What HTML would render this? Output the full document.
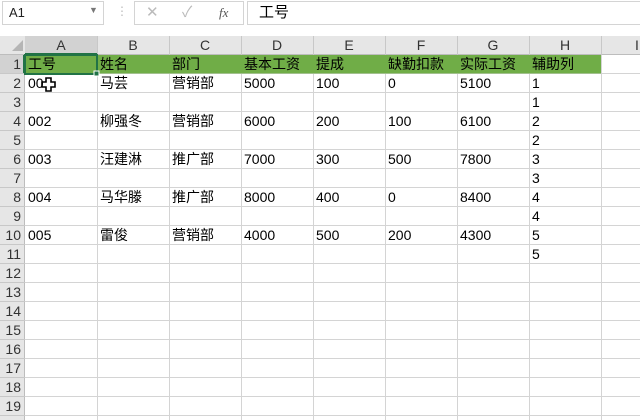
<!DOCTYPE html>
<html><head><meta charset="utf-8"><style>
*{margin:0;padding:0;box-sizing:border-box}
html,body{width:640px;height:420px;overflow:hidden}
body{background:#fff;font-family:"Liberation Sans","Noto Sans CJK SC",sans-serif;position:relative}
.a{position:absolute}
.t{position:absolute;font-size:14px;color:#000;white-space:nowrap;line-height:19px}
.rh{position:absolute;left:0;width:25px;text-align:right;padding-right:4px;font-size:14px;color:#333;line-height:19px}
.ch{position:absolute;top:36px;height:19px;width:72px;text-align:center;font-size:14px;color:#333;line-height:19px}
</style></head><body>
<div class="a" style="left:2px;top:1px;width:102px;height:24px;border:1px solid #d4d4d4;background:#fff"></div>
<div class="t" style="left:9px;top:3px;font-size:13px;color:#222">A1</div>
<div class="t" style="left:89px;top:1px;font-size:9px;color:#777">▼</div>
<div class="t" style="left:116px;top:2px;font-size:12px;color:#bbb">⋮</div>
<div class="a" style="left:134px;top:1px;width:110px;height:24px;border:1px solid #d4d4d4;background:#fff"></div>
<div class="t" style="left:146px;top:3px;font-size:15px;color:#bbb">✕</div>
<div class="t" style="left:182px;top:3px;font-size:15px;color:#bbb">✓</div>
<div class="t" style="left:219px;top:3px;font-size:13px;color:#555;font-style:italic;font-family:'Liberation Serif',serif">fx</div>
<div class="a" style="left:247px;top:1px;width:400px;height:24px;border:1px solid #d4d4d4;background:#fff"></div>
<div class="t" style="left:259px;top:3px;font-size:15px">工号</div>
<div class="a" style="left:0;top:36px;width:640px;height:19px;background:#e6e6e6;border-bottom:1px solid #bdbdbd"></div>
<div class="a" style="left:0;top:55px;width:25px;height:365px;background:#e6e6e6;border-right:1px solid #bdbdbd"></div>
<div class="a" style="left:25px;top:36px;width:72px;height:19px;background:#d2d2d2;border-bottom:2px solid #217346"></div>
<div class="a" style="left:0;top:55px;width:25px;height:19px;background:#d2d2d2;border-right:2px solid #217346"></div>
<div class="a" style="left:12px;top:40px;width:0;height:0;border-left:11px solid transparent;border-bottom:11px solid #b5b5b5"></div>
<div class="ch" style="left:25px">A</div><div class="ch" style="left:97px">B</div><div class="ch" style="left:169px">C</div><div class="ch" style="left:241px">D</div><div class="ch" style="left:313px">E</div><div class="ch" style="left:385px">F</div><div class="ch" style="left:457px">G</div><div class="ch" style="left:529px">H</div><div class="ch" style="left:601px">I</div>
<svg class="a" style="left:0;top:0" width="640" height="420">
<g stroke="#d4d4d4" stroke-width="1">
<line x1="97.5" y1="55" x2="97.5" y2="420"/><line x1="169.5" y1="55" x2="169.5" y2="420"/><line x1="241.5" y1="55" x2="241.5" y2="420"/><line x1="313.5" y1="55" x2="313.5" y2="420"/><line x1="385.5" y1="55" x2="385.5" y2="420"/><line x1="457.5" y1="55" x2="457.5" y2="420"/><line x1="529.5" y1="55" x2="529.5" y2="420"/><line x1="601.5" y1="55" x2="601.5" y2="420"/>
<line x1="25" y1="73.5" x2="640" y2="73.5"/><line x1="25" y1="92.5" x2="640" y2="92.5"/><line x1="25" y1="111.5" x2="640" y2="111.5"/><line x1="25" y1="130.5" x2="640" y2="130.5"/><line x1="25" y1="149.5" x2="640" y2="149.5"/><line x1="25" y1="168.5" x2="640" y2="168.5"/><line x1="25" y1="187.5" x2="640" y2="187.5"/><line x1="25" y1="206.5" x2="640" y2="206.5"/><line x1="25" y1="225.5" x2="640" y2="225.5"/><line x1="25" y1="244.5" x2="640" y2="244.5"/><line x1="25" y1="263.5" x2="640" y2="263.5"/><line x1="25" y1="282.5" x2="640" y2="282.5"/><line x1="25" y1="301.5" x2="640" y2="301.5"/><line x1="25" y1="320.5" x2="640" y2="320.5"/><line x1="25" y1="339.5" x2="640" y2="339.5"/><line x1="25" y1="358.5" x2="640" y2="358.5"/><line x1="25" y1="377.5" x2="640" y2="377.5"/><line x1="25" y1="396.5" x2="640" y2="396.5"/><line x1="25" y1="415.5" x2="640" y2="415.5"/>
</g>
<g stroke="#c8c8c8"><line x1="97.5" y1="36" x2="97.5" y2="55"/><line x1="169.5" y1="36" x2="169.5" y2="55"/><line x1="241.5" y1="36" x2="241.5" y2="55"/><line x1="313.5" y1="36" x2="313.5" y2="55"/><line x1="385.5" y1="36" x2="385.5" y2="55"/><line x1="457.5" y1="36" x2="457.5" y2="55"/><line x1="529.5" y1="36" x2="529.5" y2="55"/><line x1="601.5" y1="36" x2="601.5" y2="55"/>
<line x1="0" y1="73.5" x2="25" y2="73.5"/><line x1="0" y1="92.5" x2="25" y2="92.5"/><line x1="0" y1="111.5" x2="25" y2="111.5"/><line x1="0" y1="130.5" x2="25" y2="130.5"/><line x1="0" y1="149.5" x2="25" y2="149.5"/><line x1="0" y1="168.5" x2="25" y2="168.5"/><line x1="0" y1="187.5" x2="25" y2="187.5"/><line x1="0" y1="206.5" x2="25" y2="206.5"/><line x1="0" y1="225.5" x2="25" y2="225.5"/><line x1="0" y1="244.5" x2="25" y2="244.5"/><line x1="0" y1="263.5" x2="25" y2="263.5"/><line x1="0" y1="282.5" x2="25" y2="282.5"/><line x1="0" y1="301.5" x2="25" y2="301.5"/><line x1="0" y1="320.5" x2="25" y2="320.5"/><line x1="0" y1="339.5" x2="25" y2="339.5"/><line x1="0" y1="358.5" x2="25" y2="358.5"/><line x1="0" y1="377.5" x2="25" y2="377.5"/><line x1="0" y1="396.5" x2="25" y2="396.5"/><line x1="0" y1="415.5" x2="25" y2="415.5"/></g>
<rect x="25" y="55" width="576" height="18.5" fill="#70ad47"/>
<rect x="25" y="55" width="72" height="19" fill="none" stroke="#217346" stroke-width="2"/>
<rect x="94" y="71" width="5" height="5" fill="#217346" stroke="#fff" stroke-width="1"/>
<path d="M46 78h5v4h4v5h-4v4h-5v-4h-4v-5h4z" fill="#fff" stroke="#000" stroke-width="1.6"/>
</svg>
<div class="rh" style="top:55px">1</div><div class="rh" style="top:74px">2</div><div class="rh" style="top:93px">3</div><div class="rh" style="top:112px">4</div><div class="rh" style="top:131px">5</div><div class="rh" style="top:150px">6</div><div class="rh" style="top:169px">7</div><div class="rh" style="top:188px">8</div><div class="rh" style="top:207px">9</div><div class="rh" style="top:226px">10</div><div class="rh" style="top:245px">11</div><div class="rh" style="top:264px">12</div><div class="rh" style="top:283px">13</div><div class="rh" style="top:302px">14</div><div class="rh" style="top:321px">15</div><div class="rh" style="top:340px">16</div><div class="rh" style="top:359px">17</div><div class="rh" style="top:378px">18</div><div class="rh" style="top:397px">19</div>
<div class="t" style="left:28px;top:55px">工号</div><div class="t" style="left:100px;top:55px">姓名</div><div class="t" style="left:172px;top:55px">部门</div><div class="t" style="left:244px;top:55px">基本工资</div><div class="t" style="left:316px;top:55px">提成</div><div class="t" style="left:388px;top:55px">缺勤扣款</div><div class="t" style="left:460px;top:55px">实际工资</div><div class="t" style="left:532px;top:55px">辅助列</div>
<div class="t" style="left:28px;top:74px">00</div><div class="t" style="left:100px;top:74px">马芸</div><div class="t" style="left:172px;top:74px">营销部</div><div class="t" style="left:244px;top:74px">5000</div><div class="t" style="left:316px;top:74px">100</div><div class="t" style="left:388px;top:74px">0</div><div class="t" style="left:460px;top:74px">5100</div><div class="t" style="left:532px;top:74px">1</div>
<div class="t" style="left:532px;top:93px">1</div>
<div class="t" style="left:28px;top:112px">002</div><div class="t" style="left:100px;top:112px">柳强冬</div><div class="t" style="left:172px;top:112px">营销部</div><div class="t" style="left:244px;top:112px">6000</div><div class="t" style="left:316px;top:112px">200</div><div class="t" style="left:388px;top:112px">100</div><div class="t" style="left:460px;top:112px">6100</div><div class="t" style="left:532px;top:112px">2</div>
<div class="t" style="left:532px;top:131px">2</div>
<div class="t" style="left:28px;top:150px">003</div><div class="t" style="left:100px;top:150px">汪建淋</div><div class="t" style="left:172px;top:150px">推广部</div><div class="t" style="left:244px;top:150px">7000</div><div class="t" style="left:316px;top:150px">300</div><div class="t" style="left:388px;top:150px">500</div><div class="t" style="left:460px;top:150px">7800</div><div class="t" style="left:532px;top:150px">3</div>
<div class="t" style="left:532px;top:169px">3</div>
<div class="t" style="left:28px;top:188px">004</div><div class="t" style="left:100px;top:188px">马华滕</div><div class="t" style="left:172px;top:188px">推广部</div><div class="t" style="left:244px;top:188px">8000</div><div class="t" style="left:316px;top:188px">400</div><div class="t" style="left:388px;top:188px">0</div><div class="t" style="left:460px;top:188px">8400</div><div class="t" style="left:532px;top:188px">4</div>
<div class="t" style="left:532px;top:207px">4</div>
<div class="t" style="left:28px;top:226px">005</div><div class="t" style="left:100px;top:226px">雷俊</div><div class="t" style="left:172px;top:226px">营销部</div><div class="t" style="left:244px;top:226px">4000</div><div class="t" style="left:316px;top:226px">500</div><div class="t" style="left:388px;top:226px">200</div><div class="t" style="left:460px;top:226px">4300</div><div class="t" style="left:532px;top:226px">5</div>
<div class="t" style="left:532px;top:245px">5</div>
</body></html>
